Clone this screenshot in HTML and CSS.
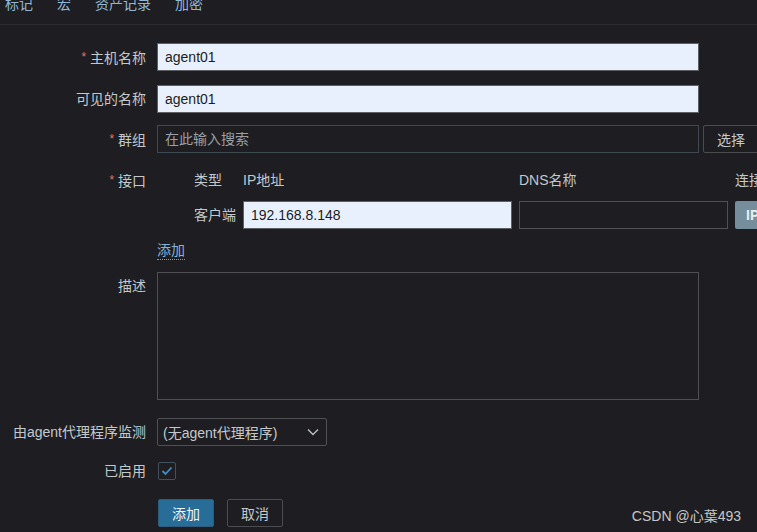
FILE: index.html
```html
<!DOCTYPE html>
<html lang="zh">
<head>
<meta charset="utf-8">
<title>主机</title>
<link rel="stylesheet" href="styles.css">
</head>
<body>
<div class="page">
  <nav class="tabs">
    <span class="tab">标记</span>
    <span class="tab">宏</span>
    <span class="tab">资产记录</span>
    <span class="tab">加密</span>
  </nav>
  <form class="form">
    <div class="row r1">
      <label class="label"><span class="req">*</span> 主机名称</label>
      <div class="field"><input class="input light" value="agent01"></div>
    </div>
    <div class="row r2">
      <label class="label">可见的名称</label>
      <div class="field"><input class="input light" value="agent01"></div>
    </div>
    <div class="row r3">
      <label class="label"><span class="req">*</span> 群组</label>
      <div class="field group">
        <div class="input dark ph">在此输入搜索</div>
        <button type="button" class="btn-alt">选择</button>
      </div>
    </div>
    <div class="row r4">
      <label class="label"><span class="req">*</span> 接口</label>
      <div class="field">
        <div class="iface">
          <span class="ih">类型</span>
          <span class="ih">IP地址</span>
          <span class="ih">DNS名称</span>
          <span class="ih">连接到</span>
          <span class="itype">客户端</span>
          <input class="input light" value="192.168.8.148">
          <input class="input dark" value="">
          <span class="ipbtn">IP</span>
        </div>
        <a class="link">添加</a>
      </div>
    </div>
    <div class="row r5">
      <label class="label">描述</label>
      <div class="field"><textarea class="textarea"></textarea></div>
    </div>
    <div class="row r6">
      <label class="label">由agent代理程序监测</label>
      <div class="field">
        <div class="select">
          <span>(无agent代理程序)</span>
          <svg class="chev" width="12" height="8" viewBox="0 0 12 8"><path d="M1 1.5 L6 6.5 L11 1.5" fill="none" stroke="#b8bec4" stroke-width="1.4"/></svg>
        </div>
      </div>
    </div>
    <div class="row r7">
      <label class="label lc">已启用</label>
      <div class="field">
        <span class="check"><svg width="12" height="10" viewBox="0 0 12 10"><path d="M1.5 5 L4.5 8 L10.5 1.5" fill="none" stroke="#3d8fcc" stroke-width="1.8"/></svg></span>
      </div>
    </div>
    <div class="row r8">
      <span class="label"></span>
      <div class="field buttons">
        <button type="button" class="btn-main">添加</button>
        <button type="button" class="btn-alt">取消</button>
      </div>
    </div>
  </form>
  <div class="watermark">CSDN @心葉493</div>
</div>
</body>
</html>
```
FILE: styles.css
```css
* { box-sizing: border-box; }
html, body {
  margin: 0;
  padding: 0;
  background: #1e1e22;
  width: 757px;
  height: 532px;
  overflow: hidden;
}
.page {
  position: relative;
  width: 757px;
  height: 532px;
  overflow: hidden;
  font-family: "Liberation Sans", "Noto Sans CJK SC", sans-serif;
  font-size: 14px;
  color: #c3c8cd;
}
.tabs {
  height: 25px;
  border-bottom: 1px solid #2c2c31;
  display: flex;
  gap: 24px;
  padding-left: 5px;
  overflow: hidden;
}
.tab {
  color: #8fb8d8;
  line-height: 14px;
  margin-top: -3px;
}
.form {
  padding-top: 18px;
}
.row {
  display: grid;
  grid-template-columns: 146px 1fr;
  column-gap: 11px;
}
.field { min-width: 0; }
.label {
  text-align: right;
  line-height: 28px;
  color: #c3c8cd;
  white-space: nowrap;
}
.req {
  color: #d47a73;
  font-size: 12px;
  vertical-align: 2px;
}
.r2 { margin-top: 13px; }
.r3 { margin-top: 12px; }
.r4 { margin-top: 15px; }
.r5 { margin-top: 12px; }
.r6 { margin-top: 18px; }
.r7 { margin-top: 16px; }
.r8 { margin-top: 19px; }
.input {
  display: block;
  height: 28px;
  width: 542px;
  padding: 0 7px;
  font-family: inherit;
  font-size: 14px;
  line-height: 26px;
  border-radius: 0;
  outline: none;
}
.light {
  background: #e8f0fe;
  border: 1px solid #5d5f63;
  color: #1c1c1c;
}
.dark {
  background: #1e1e22;
  border: 1px solid #4e5054;
  color: #c3c8cd;
}
.group {
  display: flex;
  gap: 4px;
}
.group .dark {
  border-color: #3e4a52;
  flex-shrink: 0;
}
.ph {
  color: #9aa0a6;
}
.btn-alt {
  height: 28px;
  padding: 0 13px;
  background: #1e1e22;
  border: 1px solid #4a4c50;
  border-radius: 2px;
  color: #c3c8cd;
  font-family: inherit;
  font-size: 14px;
  flex-shrink: 0;
}
.r4 .label { line-height: 22px; }
.iface {
  display: grid;
  grid-template-columns: 42px 269px 209px 60px;
  column-gap: 7px;
  row-gap: 10px;
  margin-left: 37px;
  align-items: center;
  width: 650px;
}
.ih {
  line-height: 22px;
  color: #c3c8cd;
  white-space: nowrap;
}
.itype {
  line-height: 28px;
  white-space: nowrap;
}
.iface .input { width: 100%; }
.ipbtn {
  display: block;
  height: 28px;
  background: #768e9b;
  color: #e8eef2;
  border-radius: 2px;
  line-height: 28px;
  padding-left: 11px;
  font-weight: bold;
}
.link {
  display: inline-block;
  margin-top: 12px;
  line-height: 18px;
  color: #7fb5dc;
  border-bottom: 1px dotted #7f98ac;
}
.textarea {
  display: block;
  width: 542px;
  height: 128px;
  background: #1e1e22;
  border: 1px solid #4e5054;
  resize: none;
  outline: none;
}
.select {
  width: 170px;
  height: 28px;
  border: 1px solid #4e5054;
  border-radius: 2px;
  display: flex;
  align-items: center;
  justify-content: space-between;
  padding: 0 4px 0 5px;
  color: #c3c8cd;
}
.chev { margin-right: 3px; }
.lc { line-height: 18px; }
.check {
  width: 18px;
  height: 18px;
  margin-left: 1px;
  border: 1px solid #3f505e;
  border-radius: 2px;
  display: flex;
  align-items: center;
  justify-content: center;
}
.buttons {
  display: flex;
  gap: 13px;
}
.btn-main {
  height: 28px;
  width: 56px;
  margin-left: 1px;
  background: #276d97;
  border: 1px solid #2e5c7c;
  border-radius: 2px;
  color: #eef3f7;
  font-family: inherit;
  font-size: 14px;
}
.buttons .btn-alt { width: 56px; padding: 0; }
.watermark {
  position: absolute;
  right: 16px;
  bottom: 8px;
  color: #c6c6c6;
  font-size: 14px;
  line-height: 16px;
  font-family: "Liberation Sans", "Noto Sans CJK SC", sans-serif;
}
```
